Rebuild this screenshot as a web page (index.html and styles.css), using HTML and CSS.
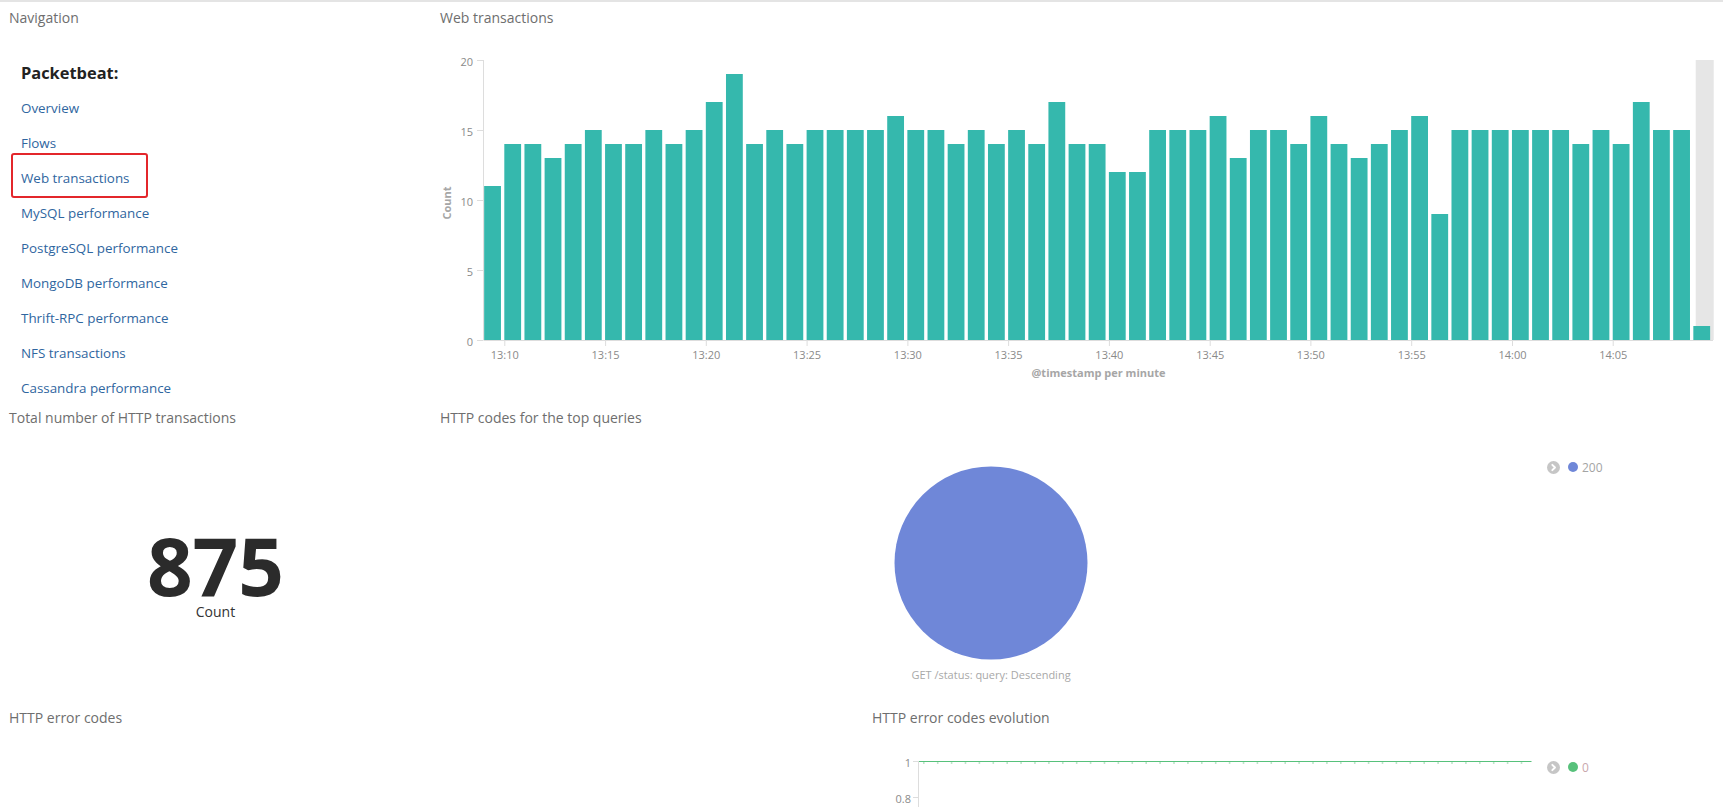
FILE: index.html
```html
<!DOCTYPE html>
<html lang="en">
<head>
<meta charset="utf-8">
<title>Packetbeat Web transactions</title>
<link rel="stylesheet" href="styles.css">
</head>
<body>
<div class="dash">
  <div class="row row-top">
    <section class="panel">
      <h2 class="panel-title">Navigation</h2>
      <div class="nav">
        <h3>Packetbeat:</h3>
        <ul>
          <li><a href="#">Overview</a></li>
          <li><a href="#">Flows</a></li>
          <li class="hl"><a href="#">Web transactions</a></li>
          <li><a href="#">MySQL performance</a></li>
          <li><a href="#">PostgreSQL performance</a></li>
          <li><a href="#">MongoDB performance</a></li>
          <li><a href="#">Thrift-RPC performance</a></li>
          <li><a href="#">NFS transactions</a></li>
          <li><a href="#">Cassandra performance</a></li>
        </ul>
      </div>
    </section>
    <section class="panel">
      <h2 class="panel-title">Web transactions</h2>
      <svg class="bar-chart" width="1292" height="345" viewBox="0 0 1292 345">
        <g class="axis">
          <line x1="52.5" y1="20" x2="52.5" y2="300"/>
          <line x1="52.5" y1="300.5" x2="1282" y2="300.5"/>
          <line x1="46" y1="20.5" x2="52" y2="20.5"/>
          <line x1="46" y1="90.5" x2="52" y2="90.5"/>
          <line x1="46" y1="160.5" x2="52" y2="160.5"/>
          <line x1="46" y1="230.5" x2="52" y2="230.5"/>
          <line x1="46" y1="300.5" x2="52" y2="300.5"/>
        </g>
        <g class="ylabels">
          <text x="42" y="21">20</text>
          <text x="42" y="91">15</text>
          <text x="42" y="161">10</text>
          <text x="42" y="231">5</text>
          <text x="42" y="301">0</text>
        </g>
        <text class="axis-title" transform="translate(15 163) rotate(-90)">Count</text>
        <rect class="now" x="1264.7" y="20" width="18" height="280"/>
        <g class="bars">
          <rect x="53.15" y="146" width="16.8" height="154"/>
          <rect x="73.30" y="104" width="16.8" height="196"/>
          <rect x="93.46" y="104" width="16.8" height="196"/>
          <rect x="113.61" y="118" width="16.8" height="182"/>
          <rect x="133.76" y="104" width="16.8" height="196"/>
          <rect x="153.92" y="90" width="16.8" height="210"/>
          <rect x="174.07" y="104" width="16.8" height="196"/>
          <rect x="194.22" y="104" width="16.8" height="196"/>
          <rect x="214.37" y="90" width="16.8" height="210"/>
          <rect x="234.53" y="104" width="16.8" height="196"/>
          <rect x="254.68" y="90" width="16.8" height="210"/>
          <rect x="274.83" y="62" width="16.8" height="238"/>
          <rect x="294.99" y="34" width="16.8" height="266"/>
          <rect x="315.14" y="104" width="16.8" height="196"/>
          <rect x="335.29" y="90" width="16.8" height="210"/>
          <rect x="355.45" y="104" width="16.8" height="196"/>
          <rect x="375.60" y="90" width="16.8" height="210"/>
          <rect x="395.75" y="90" width="16.8" height="210"/>
          <rect x="415.90" y="90" width="16.8" height="210"/>
          <rect x="436.06" y="90" width="16.8" height="210"/>
          <rect x="456.21" y="76" width="16.8" height="224"/>
          <rect x="476.36" y="90" width="16.8" height="210"/>
          <rect x="496.52" y="90" width="16.8" height="210"/>
          <rect x="516.67" y="104" width="16.8" height="196"/>
          <rect x="536.82" y="90" width="16.8" height="210"/>
          <rect x="556.98" y="104" width="16.8" height="196"/>
          <rect x="577.13" y="90" width="16.8" height="210"/>
          <rect x="597.28" y="104" width="16.8" height="196"/>
          <rect x="617.43" y="62" width="16.8" height="238"/>
          <rect x="637.59" y="104" width="16.8" height="196"/>
          <rect x="657.74" y="104" width="16.8" height="196"/>
          <rect x="677.89" y="132" width="16.8" height="168"/>
          <rect x="698.05" y="132" width="16.8" height="168"/>
          <rect x="718.20" y="90" width="16.8" height="210"/>
          <rect x="738.35" y="90" width="16.8" height="210"/>
          <rect x="758.51" y="90" width="16.8" height="210"/>
          <rect x="778.66" y="76" width="16.8" height="224"/>
          <rect x="798.81" y="118" width="16.8" height="182"/>
          <rect x="818.96" y="90" width="16.8" height="210"/>
          <rect x="839.12" y="90" width="16.8" height="210"/>
          <rect x="859.27" y="104" width="16.8" height="196"/>
          <rect x="879.42" y="76" width="16.8" height="224"/>
          <rect x="899.58" y="104" width="16.8" height="196"/>
          <rect x="919.73" y="118" width="16.8" height="182"/>
          <rect x="939.88" y="104" width="16.8" height="196"/>
          <rect x="960.04" y="90" width="16.8" height="210"/>
          <rect x="980.19" y="76" width="16.8" height="224"/>
          <rect x="1000.34" y="174" width="16.8" height="126"/>
          <rect x="1020.49" y="90" width="16.8" height="210"/>
          <rect x="1040.65" y="90" width="16.8" height="210"/>
          <rect x="1060.80" y="90" width="16.8" height="210"/>
          <rect x="1080.95" y="90" width="16.8" height="210"/>
          <rect x="1101.11" y="90" width="16.8" height="210"/>
          <rect x="1121.26" y="90" width="16.8" height="210"/>
          <rect x="1141.41" y="104" width="16.8" height="196"/>
          <rect x="1161.57" y="90" width="16.8" height="210"/>
          <rect x="1181.72" y="104" width="16.8" height="196"/>
          <rect x="1201.87" y="62" width="16.8" height="238"/>
          <rect x="1222.02" y="90" width="16.8" height="210"/>
          <rect x="1242.18" y="90" width="16.8" height="210"/>
          <rect x="1262.33" y="286" width="16.8" height="14"/>
        </g>
        <g class="axis">
          <line x1="73.8" y1="301" x2="73.8" y2="306"/>
          <line x1="174.6" y1="301" x2="174.6" y2="306"/>
          <line x1="275.3" y1="301" x2="275.3" y2="306"/>
          <line x1="376.1" y1="301" x2="376.1" y2="306"/>
          <line x1="476.9" y1="301" x2="476.9" y2="306"/>
          <line x1="577.6" y1="301" x2="577.6" y2="306"/>
          <line x1="678.4" y1="301" x2="678.4" y2="306"/>
          <line x1="779.2" y1="301" x2="779.2" y2="306"/>
          <line x1="879.9" y1="301" x2="879.9" y2="306"/>
          <line x1="980.7" y1="301" x2="980.7" y2="306"/>
          <line x1="1081.5" y1="301" x2="1081.5" y2="306"/>
          <line x1="1182.2" y1="301" x2="1182.2" y2="306"/>
        </g>
        <g class="xlabels">
          <text x="73.8" y="314">13:10</text>
          <text x="174.6" y="314">13:15</text>
          <text x="275.3" y="314">13:20</text>
          <text x="376.1" y="314">13:25</text>
          <text x="476.9" y="314">13:30</text>
          <text x="577.6" y="314">13:35</text>
          <text x="678.4" y="314">13:40</text>
          <text x="779.2" y="314">13:45</text>
          <text x="879.9" y="314">13:50</text>
          <text x="980.7" y="314">13:55</text>
          <text x="1081.5" y="314">14:00</text>
          <text x="1182.2" y="314">14:05</text>
        </g>
        <text class="axis-title xt" x="667.5" y="332">@timestamp per minute</text>
      </svg>
    </section>
  </div>

  <div class="row row-mid">
    <section class="panel">
      <h2 class="panel-title">Total number of HTTP transactions</h2>
      <div class="metric">
        <div class="metric-value">875</div>
        <div class="metric-label">Count</div>
      </div>
    </section>
    <section class="panel">
      <h2 class="panel-title">HTTP codes for the top queries</h2>
      <div class="vis vis-pie">
        <div class="vis-chart">
          <svg class="pie" width="1116" height="263" viewBox="0 0 1116 263">
            <circle cx="560" cy="136" r="96.5" fill="#6f87d8"/>
            <text class="pie-label" x="560" y="247.5">GET /status: query: Descending</text>
          </svg>
        </div>
        <ul class="legend">
          <li class="legend-item">
            <svg class="chev" width="13" height="13" viewBox="0 0 13 13"><circle cx="6.5" cy="6.5" r="6.5" fill="#c6c6c6"/><path d="M5.3 3.8 L8 6.5 L5.3 9.2" fill="none" stroke="#fff" stroke-width="1.9" stroke-linecap="round" stroke-linejoin="round"/></svg>
            <span class="dot dot-blue"></span>
            <span class="legend-text">200</span>
          </li>
        </ul>
      </div>
    </section>
  </div>

  <div class="row row-bot">
    <section class="panel">
      <h2 class="panel-title">HTTP error codes</h2>
    </section>
    <section class="panel">
      <h2 class="panel-title">HTTP error codes evolution</h2>
      <div class="vis vis-line">
        <div class="vis-chart">
          <svg class="line-chart" width="684" height="80" viewBox="0 0 684 80">
            <g class="axis">
              <line x1="55.5" y1="34" x2="55.5" y2="80"/>
              <line x1="50" y1="34.5" x2="55" y2="34.5"/>
              <line x1="50" y1="70.5" x2="55" y2="70.5"/>
            </g>
            <g class="ylabels">
              <text x="48" y="35">1</text>
              <text x="48" y="71">0.8</text>
            </g>
            <line x1="56" y1="34.5" x2="668.5" y2="34.5" stroke="#57c17b" stroke-width="1"/>
            <line x1="60" y1="36" x2="668" y2="36" stroke="#a9dcb9" stroke-width="1.6" stroke-dasharray="1.6 12.3"/>
          </svg>
        </div>
        <ul class="legend">
          <li class="legend-item">
            <svg class="chev" width="13" height="13" viewBox="0 0 13 13"><circle cx="6.5" cy="6.5" r="6.5" fill="#c6c6c6"/><path d="M5.3 3.8 L8 6.5 L5.3 9.2" fill="none" stroke="#fff" stroke-width="1.9" stroke-linecap="round" stroke-linejoin="round"/></svg>
            <span class="dot dot-green"></span>
            <span class="legend-text zero">0</span>
          </li>
        </ul>
      </div>
    </section>
  </div>
</div>
</body>
</html>
```

FILE: styles.css
```css
html, body {
  margin: 0;
  padding: 0;
  overflow: hidden;
  background: #ffffff;
}

body {
  font-family: "Open Sans", "Liberation Sans", sans-serif;
  color: #333333;
}

.dash {
  box-shadow: inset 0 2px 0 #e4e4e4;
}

.row {
  display: grid;
}

.row-top {
  grid-template-columns: 431px 1fr;
  height: 400px;
}

.row-mid {
  grid-template-columns: 431px 1fr;
  height: 300px;
}

.row-bot {
  grid-template-columns: 863px 1fr;
  height: 107px;
  overflow: hidden;
}

.panel {
  padding: 9px 9px 0;
  min-width: 0;
}

.panel-title {
  margin: 0;
  font-size: 14px;
  line-height: 18px;
  font-weight: 400;
  color: #6e6e6e;
  white-space: nowrap;
}

/* Navigation */
.nav {
  padding-left: 12px;
}

.nav h3 {
  margin: 35px 0 7px;
  font-size: 16.4px;
  line-height: 22px;
  font-weight: 700;
  color: #222222;
}

.nav ul {
  list-style: none;
  margin: 0;
  padding: 0;
}

.nav li {
  height: 35px;
  line-height: 35px;
  font-size: 13.4px;
}

.nav a {
  color: #2f66a0;
  text-decoration: none;
}

.nav .hl {
  position: relative;
}

.nav .hl::after {
  content: "";
  position: absolute;
  left: -10px;
  top: -8px;
  width: 137px;
  height: 45px;
  box-sizing: border-box;
  border: 2.5px solid #e3262b;
  border-radius: 3px;
}

/* Bar chart */
.bar-chart {
  display: block;
  margin: 13px 0 0 -9px;
}

.axis line {
  stroke: #dddddd;
  stroke-width: 1;
}

.ylabels text {
  font-size: 11px;
  fill: #8a8a8a;
  text-anchor: end;
  dominant-baseline: central;
}

.xlabels text {
  font-size: 11px;
  fill: #8a8a8a;
  text-anchor: middle;
  dominant-baseline: central;
}

.axis-title {
  font-size: 11px;
  font-weight: 700;
  fill: #a6a6a6;
  text-anchor: middle;
  dominant-baseline: central;
}

.bars rect {
  fill: #35b8ad;
}

.now {
  fill: #e6e6e6;
}

/* Metric */
.metric {
  padding-top: 102px;
  text-align: center;
}

.metric-value {
  font-size: 80px;
  line-height: 72px;
  font-weight: 700;
  color: #2b2b2b;
}

.metric-label {
  margin-top: 2px;
  font-size: 14px;
  line-height: 18px;
  color: #333333;
}

/* Vis with legend */
.vis {
  display: flex;
  margin: 0 -9px;
}

.vis-pie {
  height: 263px;
}

.vis-line {
  height: 80px;
}

.vis-chart {
  flex: 1;
  min-width: 0;
}

.vis-chart svg {
  display: block;
}

.pie-label {
  font-size: 11px;
  fill: #a8a8a8;
  text-anchor: middle;
  dominant-baseline: central;
}

.legend {
  width: 176px;
  margin: 0;
  padding: 33px 0 0;
  list-style: none;
}

.legend-item {
  display: flex;
  align-items: center;
  height: 14px;
  font-size: 12px;
  color: #a4a4a4;
}

.chev {
  display: block;
  flex: none;
}

.dot {
  width: 10px;
  height: 10px;
  border-radius: 50%;
  margin: 0 4px 0 8px;
  flex: none;
}

.dot-blue {
  background: #6f87d8;
}

.dot-green {
  background: #57c17b;
}

.legend-text.zero {
  color: #c9a7ad;
}
```
